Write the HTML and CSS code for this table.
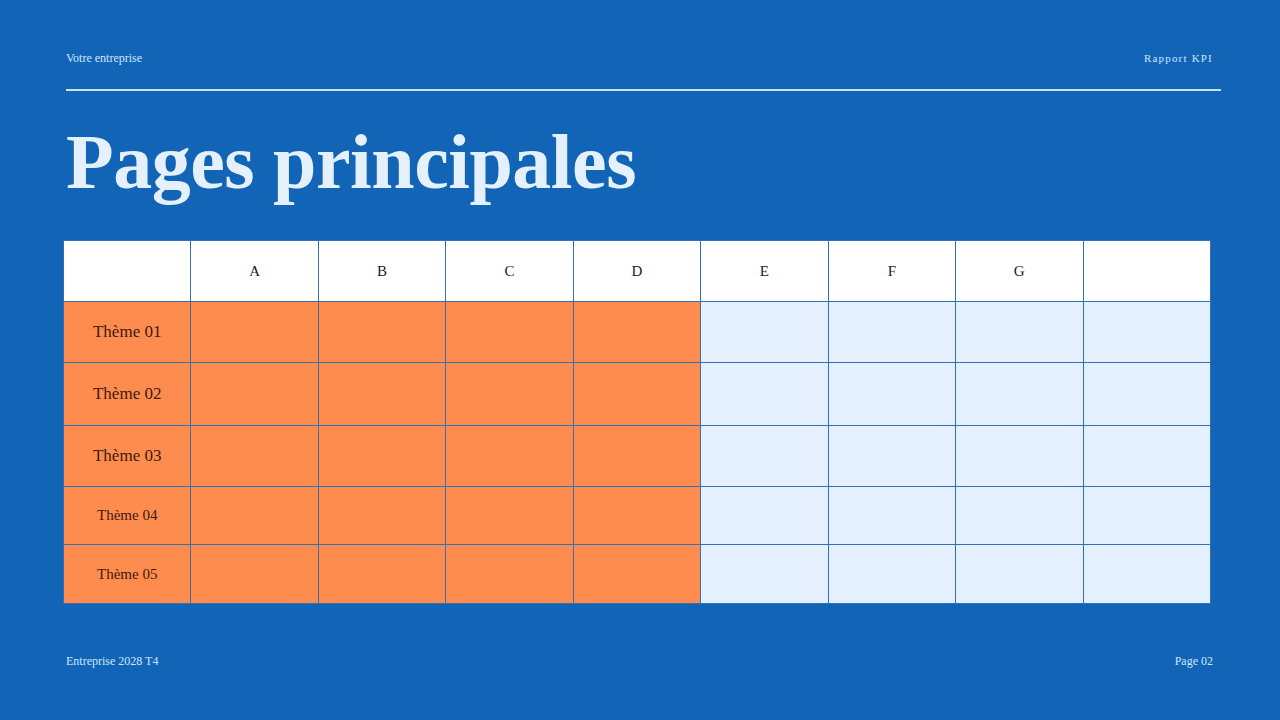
FILE: index.html
```html
<!DOCTYPE html>
<html lang="fr">
<head>
<meta charset="utf-8">
<link rel="stylesheet" href="styles.css">
</head>
<body>
<div class="slide">
  <header class="top">
    <span class="brand">Votre entreprise</span>
    <span class="report">Rapport KPI</span>
  </header>
  <div class="rule"></div>
  <h1 class="title">Pages principales</h1>
  <table class="grid">
    <tr class="head">
      <th></th><th>A</th><th>B</th><th>C</th><th>D</th><th>E</th><th>F</th><th>G</th><th></th>
    </tr>
    <tr class="r1"><td class="theme">Thème 01</td><td class="o"></td><td class="o"></td><td class="o"></td><td class="o"></td><td class="l"></td><td class="l"></td><td class="l"></td><td class="l"></td></tr>
    <tr class="r2"><td class="theme">Thème 02</td><td class="o"></td><td class="o"></td><td class="o"></td><td class="o"></td><td class="l"></td><td class="l"></td><td class="l"></td><td class="l"></td></tr>
    <tr class="r3"><td class="theme">Thème 03</td><td class="o"></td><td class="o"></td><td class="o"></td><td class="o"></td><td class="l"></td><td class="l"></td><td class="l"></td><td class="l"></td></tr>
    <tr class="r4"><td class="theme small">Thème 04</td><td class="o"></td><td class="o"></td><td class="o"></td><td class="o"></td><td class="l"></td><td class="l"></td><td class="l"></td><td class="l"></td></tr>
    <tr class="r5"><td class="theme small">Thème 05</td><td class="o"></td><td class="o"></td><td class="o"></td><td class="o"></td><td class="l"></td><td class="l"></td><td class="l"></td><td class="l"></td></tr>
  </table>
  <footer class="bottom">
    <span>Entreprise 2028 T4</span>
    <span>Page 02</span>
  </footer>
</div>
</body>
</html>
```
FILE: styles.css
```css
html, body {
  margin: 0;
  padding: 0;
}
body {
  background: #1264b6;
  font-family: "Liberation Serif", "DejaVu Serif", serif;
}
.slide {
  width: 1280px;
  height: 720px;
  box-sizing: border-box;
  padding: 0 0 0 66px;
  display: flex;
  flex-direction: column;
}
.top {
  display: flex;
  justify-content: space-between;
  align-items: center;
  padding-top: 50px;
  width: 1147px;
  height: 16px;
  color: #cfe6fb;
  font-size: 12px;
}
.report {
  letter-spacing: 1.2px;
  font-size: 11px;
}
.rule {
  margin-top: 23px;
  width: 1155px;
  height: 2px;
  background: #c9e4f8;
}
.title {
  margin: 24px 0 0 0;
  height: 93px;
  font-size: 78px;
  line-height: 93px;
  font-weight: bold;
  color: #e4f1fd;
  letter-spacing: -0.5px;
}
.grid {
  margin: 32px 0 0 -3px;
  border-collapse: collapse;
  table-layout: fixed;
  width: 1148px;
}
.grid th, .grid td {
  border: 1px solid #3471b4;
  padding: 0;
  text-align: center;
  font-weight: normal;
}
.grid th {
  background: #ffffff;
  color: #1c1c1c;
  font-size: 15px;
  height: 60px;
}
.r1 td { height: 60px; }
.r2 td { height: 62px; }
.r3 td { height: 60px; }
.r4 td { height: 57px; }
.r5 td { height: 58px; }
.o, .theme {
  background: #ff8c4f;
}
.l {
  background: #e4f0fe;
}
.theme {
  color: #3a1a0c;
  font-size: 17px;
}
.theme.small {
  font-size: 15px;
}
.bottom {
  margin-top: auto;
  margin-bottom: 51px;
  display: flex;
  justify-content: space-between;
  width: 1147px;
  color: #cfe6fb;
  font-size: 12px;
}
```
